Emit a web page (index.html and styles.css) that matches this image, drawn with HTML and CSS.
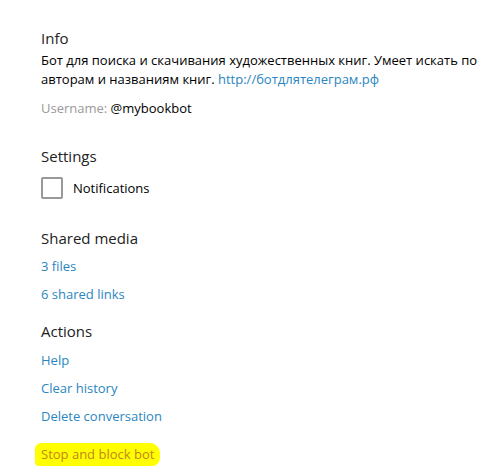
FILE: index.html
```html
<!DOCTYPE html>
<html lang="en">
<head>
  <meta charset="UTF-8">
  <meta name="viewport" content="width=device-width, initial-scale=1.0">
  <title>Bot info</title>
  <link rel="stylesheet" href="styles.css">
</head>
<body>

  <div class="profile">
    <section class="block block-info">
      <h3>Info</h3>
      <p class="about">Бот для поиска и скачивания художественных книг. Умеет искать по авторам и названиям книг. <a href="#">http://ботдлятелеграм.рф</a></p>
      <p class="username"><span class="label">Username:</span> @mybookbot</p>
    </section>

    <section class="block block-settings">
      <h3>Settings</h3>
      <label class="check">
        <span class="box"></span>
        <span>Notifications</span>
      </label>
    </section>

    <section class="block block-media">
      <h3>Shared media</h3>
      <a class="row" href="#">3 files</a>
      <a class="row" href="#">6 shared links</a>
    </section>

    <section class="block block-actions">
      <h3>Actions</h3>
      <a class="row" href="#">Help</a>
      <a class="row" href="#">Clear history</a>
      <a class="row" href="#">Delete conversation</a>
      <a class="row row-danger" href="#"><span class="marker">Stop and block bot</span></a>
    </section>
  </div>

</body>
</html>
```

FILE: styles.css
```css
body {
  font-family: 'Open Sans', sans-serif;
  font-size: 13px;
  margin: 0;
  padding: 0;
  background-color: #ffffff;
  color: #000;
}
a {
  color: #2a86bf;
  text-decoration: none;
}
.profile {
  padding: 28px 0 0 41px;
}
.block h3 {
  margin: 0;
  font-size: 15px;
  font-weight: normal;
  line-height: 20px;
  color: #222;
}
.block-settings {
  margin-top: 28px;
}
.block-media {
  margin-top: 29px;
}
.block-actions {
  margin-top: 17px;
}
.about {
  margin: 3px 0 0;
  line-height: 19px;
}
.username {
  margin: 9px 0 0;
  line-height: 20px;
}
.label {
  color: #999;
}
.check {
  display: flex;
  align-items: center;
  gap: 10px;
  margin-top: 11px;
}
.box {
  width: 18px;
  height: 18px;
  border: 2px solid #999;
  border-radius: 2px;
}
.row {
  display: block;
  margin-top: 8px;
  line-height: 20px;
}
.block-actions h3 + .row {
  margin-top: 9px;
}
.row-danger {
  margin-top: 17px;
}
.marker {
  display: inline-block;
  margin-left: -6px;
  padding: 1px 6px 2px;
  background-color: #ffff00;
  border-radius: 6px 10px 8px 4px;
  color: #c4841f;
}
```
